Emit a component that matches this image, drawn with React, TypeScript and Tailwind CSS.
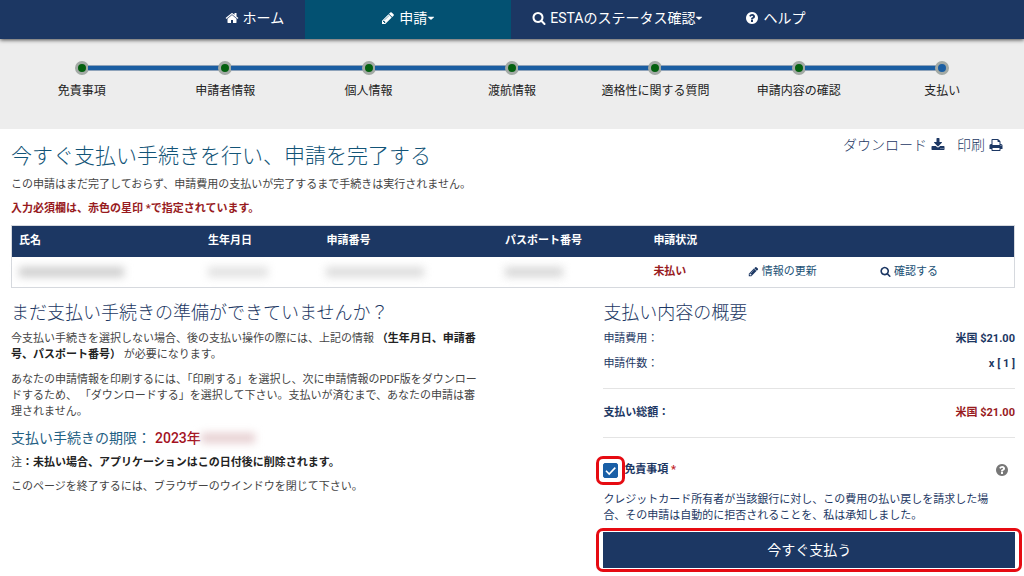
import React from 'react';

const ICONS = {
  home: 'M1472 992v480q0 26-19 45t-45 19h-384v-384h-256v384h-384q-26 0-45-19t-19-45v-480q0-1 .5-3t.5-3l575-474 575 474q1 2 1 6zm223-69l-62 74q-8 9-21 11h-3q-13 0-21-7l-692-577-692 577q-12 8-24 7-13-2-21-11l-62-74q-8-10-7-23.5t11-21.5l719-599q32-26 76-26t76 26l244 204v-195q0-14 9-23t23-9h192q14 0 23 9t9 23v408l219 182q10 8 11 21.5t-7 23.5z',
  pencil:
    'M491 1536l91-91-235-235-91 91v107h128v128h107zm523-928q0-22-22-22-10 0-17 7l-542 542q-7 7-7 17 0 22 22 22 10 0 17-7l542-542q7-7 7-17zm-54-192l416 416-832 832h-416v-416zm683 96q0 53-37 90l-166 166-416-416 166-165q36-38 90-38 53 0 91 38l235 234q37 39 37 91z',
  search:
    'M1216 832q0-185-131.5-316.5t-316.5-131.5-316.5 131.5-131.5 316.5 131.5 316.5 316.5 131.5 316.5-131.5 131.5-316.5zm512 832q0 52-38 90t-90 38q-54 0-90-38l-343-342q-179 124-399 124-143 0-273.5-55.5t-225-150-150-225-55.5-273.5 55.5-273.5 150-225 225-150 273.5-55.5 273.5 55.5 225 150 150 225 55.5 273.5q0 220-124 399l343 343q37 37 37 90z',
  help: 'M1024 1376v-192q0-14-9-23t-23-9h-192q-14 0-23 9t-9 23v192q0 14 9 23t23 9h192q14 0 23-9t9-23zm256-672q0-88-55.5-163t-138.5-116-170-41q-243 0-371 213-15 24 8 42l132 100q7 6 19 6 16 0 25-12 53-68 86-92 34-24 86-24 48 0 85.5 26t37.5 59q0 38-20 61t-68 45q-63 28-115.5 86.5t-52.5 125.5v36q0 14 9 23t23 9h192q14 0 23-9t9-23q0-19 21.5-49.5t54.5-49.5q32-18 49-28.5t46-35 44.5-48 28-60.5 12.5-81zm384 192q0 209-103 385.5t-279.5 279.5-385.5 103-385.5-103-279.5-279.5-103-385.5 103-385.5 279.5-279.5 385.5-103 385.5 103 279.5 279.5 103 385.5z',
  download:
    'M1344 1344q0-26-19-45t-45-19-45 19-19 45 19 45 45 19 45-19 19-45zm256 0q0-26-19-45t-45-19-45 19-19 45 19 45 45 19 45-19 19-45zm128-224v320q0 40-28 68t-68 28h-1472q-40 0-68-28t-28-68v-320q0-40 28-68t68-28h465l135 136q58 56 136 56t136-56l136-136h464q40 0 68 28t28 68zm-325-569q17 41-14 70l-448 448q-18 19-45 19t-45-19l-448-448q-31-29-14-70 17-39 59-39h256v-448q0-26 19-45t45-19h256q26 0 45 19t19 45v448h256q42 0 59 39z',
  print:
    'M448 1536h896v-256h-896v256zm0-640h896v-384h-160q-40 0-68-28t-28-68v-160h-640v640zm1152 64q0-26-19-45t-45-19-45 19-19 45 19 45 45 19 45-19 19-45zm128 0v416q0 13-9.5 22.5t-22.5 9.5h-224v160q0 40-28 68t-68 28h-960q-40 0-68-28t-28-68v-160h-224q-13 0-22.5-9.5t-9.5-22.5v-416q0-79 56.5-135.5t135.5-56.5h64v-544q0-40 28-68t68-28h672q40 0 88 20t76 48l152 152q28 28 48 76t20 88v256h64q79 0 135.5 56.5t56.5 135.5z',
  caret:
    'M1600 704q0 26-19 45l-640 560q-19 19-45 19t-45-19l-640-560q-19-19-19-45t19-45 45-19h1280q26 0 45 19t19 45z',
};

const Icon = ({ name, className }: { name: keyof typeof ICONS; className: string }) => (
  <svg viewBox="0 0 1792 1792" fill="currentColor" aria-hidden="true" className={className}>
    <path d={ICONS[name]} />
  </svg>
);

const STEPS = [
  '免責事項',
  '申請者情報',
  '個人情報',
  '渡航情報',
  '適格性に関する質問',
  '申請内容の確認',
  '支払い',
];

const NavBar = () => (
  <nav className="relative flex h-[39px] justify-center bg-[#1c3763] pl-[6px] text-sm text-white shadow-[0_1px_4px_rgba(0,0,0,0.7)]">
    <a href="#home" className="flex items-center gap-1 px-[21px] pb-[3px]">
      <Icon name="home" className="size-[14px]" />
      ホーム
    </a>
    <a href="#apply" className="flex w-[206px] items-center justify-center bg-[#035172] pb-[3px]">
      <Icon name="pencil" className="mr-1 size-[14px]" />
      申請
      <Icon name="caret" className="size-[8px]" />
    </a>
    <a href="#status" className="flex items-center px-[21px] pb-[3px]">
      <Icon name="search" className="mr-1 size-[14px]" />
      ESTAのステータス確認
      <Icon name="caret" className="size-[8px]" />
    </a>
    <a href="#help" className="flex items-center gap-1 px-[21px] pb-[3px]">
      <Icon name="help" className="size-[14px]" />
      ヘルプ
    </a>
  </nav>
);

const Progress = () => (
  <ol className="grid h-[90px] grid-cols-7 bg-[#ededed] px-[10px] pt-[22px] text-xs text-[#222]">
    {STEPS.map((step, i) => {
      const first = i === 0;
      const last = i === STEPS.length - 1;
      return (
        <li key={step} className="text-center">
          <div className="flex items-center">
            <span className={`h-[6px] flex-1 ${first ? '' : 'border-y border-[#8fa3ba] bg-[#1b5ea2]'}`} />
            <span
              className={`-mx-px size-[14px] rounded-full border-[3px] border-[#a3aaa5] ${
                last ? 'bg-[#1b5ea2]' : 'bg-[#04600f]'
              }`}
            />
            <span className={`h-[6px] flex-1 ${last ? '' : 'border-y border-[#8fa3ba] bg-[#1b5ea2]'}`} />
          </div>
          <div className="mt-2 leading-4">{step}</div>
        </li>
      );
    })}
  </ol>
);

const Masked = ({ className }: { className: string }) => (
  <div aria-hidden="true" className={`h-[10px] bg-[#cdcdcd] blur-[4px] ${className}`} />
);

const Applications = () => (
  <table className="mt-2 w-full table-fixed border-collapse border border-[#d6d9de] text-left">
    <colgroup>
      <col className="w-[18.9%]" />
      <col className="w-[11.8%]" />
      <col className="w-[17.8%]" />
      <col className="w-[14.8%]" />
      <col className="w-[9.4%]" />
      <col className="w-[13.2%]" />
      <col />
    </colgroup>
    <thead className="bg-[#1c3763] text-white">
      <tr className="h-[31px]">
        <th className="px-[7px]">氏名</th>
        <th className="px-[7px]">生年月日</th>
        <th className="px-[7px]">申請番号</th>
        <th className="px-[7px]">パスポート番号</th>
        <th className="px-[7px]">申請状況</th>
        <td />
        <td />
      </tr>
    </thead>
    <tbody>
      <tr className="h-[31px]">
        <td className="px-[7px]"><Masked className="w-[105px]" /></td>
        <td className="px-[7px]"><Masked className="w-[60px] opacity-60" /></td>
        <td className="px-[7px]"><Masked className="w-[98px] opacity-70" /></td>
        <td className="px-[7px]"><Masked className="w-[58px] opacity-80" /></td>
        <td className="px-[7px] font-bold text-[#981b1e]">未払い</td>
        <td className="px-[7px]">
          <a href="#update" className="flex items-center gap-[3px] text-[#205075]">
            <Icon name="pencil" className="size-[11px] text-[#1c3763]" />
            情報の更新
          </a>
        </td>
        <td className="px-[7px]">
          <a href="#view" className="flex items-center gap-[3px] text-[#205075]">
            <Icon name="search" className="size-[11px] text-[#1c3763]" />
            確認する
          </a>
        </td>
      </tr>
    </tbody>
  </table>
);

const Instructions = () => (
  <section className="flex-1">
    <h2 className="text-lg leading-6 font-light text-[#1c3763]">
      まだ支払い手続きの準備ができていませんか？
    </h2>
    <p className="mt-[6px]">
      今支払い手続きを選択しない場合、後の支払い操作の際には、上記の情報{' '}
      <b className="text-[#222]">
        （生年月日、申請番
        <br />
        号、パスポート番号）
      </b>{' '}
      が必要になります。
    </p>
    <p className="mt-[9px]">
      あなたの申請情報を印刷するには、「印刷する」を選択し、次に申請情報のPDF版をダウンロー
      <br />
      ドするため、 「ダウンロードする」を選択して下さい。支払いが済むまで、あなたの申請は審
      <br />
      理されません。
    </p>
    <h3 className="mt-2 flex items-center text-sm leading-5 text-[#1f6083]">
      支払い手続きの期限：
      <span className="ml-1 font-medium text-[#a3121f]">2023年</span>
      <span aria-hidden="true" className="h-[10px] w-[54px] bg-[#e6ced0] blur-[4px]" />
    </h3>
    <p className="mt-[7px]">
      注<b className="text-[#222]">：未払い場合、アプリケーションはこの日付後に削除されます。</b>
    </p>
    <p className="mt-2">このページを終了するには、ブラウザーのウインドウを閉じて下さい。</p>
  </section>
);

const Summary = () => {
  const [agreed, setAgreed] = React.useState(true);

  return (
    <section className="w-[41%] text-[#1c3763]">
      <h2 className="text-lg leading-6 font-light">支払い内容の概要</h2>
      <dl className="mt-[6px]">
        <div className="flex justify-between">
          <dt>申請費用：</dt>
          <dd className="font-bold">米国 $21.00</dd>
        </div>
        <div className="mt-[9px] flex justify-between">
          <dt>申請件数：</dt>
          <dd className="font-bold">x [ 1 ]</dd>
        </div>
        <div className="mt-4 flex justify-between border-y border-[#e4e4e4] py-4 font-bold">
          <dt>支払い総額：</dt>
          <dd className="text-[#981b1e]">米国 $21.00</dd>
        </div>
      </dl>

      <div className="mt-6 flex items-center">
        <span className="relative mr-[6px] size-[15px]">
          <input
            id="agree"
            type="checkbox"
            checked={agreed}
            onChange={e => setAgreed(e.target.checked)}
            className="block size-[15px] appearance-none rounded-[2px] border border-[#1a5fa6] checked:bg-[#1a5fa6]"
          />
          {agreed && (
            <svg
              viewBox="0 0 15 15"
              fill="none"
              stroke="white"
              strokeWidth="1.6"
              className="pointer-events-none absolute inset-0"
            >
              <path d="M3 7.8l3.2 3.2L12.3 4.6" />
            </svg>
          )}
          <span className="pointer-events-none absolute -inset-[7px] rounded-[7px] border-[3px] border-[#e60b12]" />
        </span>
        <label htmlFor="agree" className="font-bold">
          免責事項 <span className="text-[#c21f2c]">*</span>
        </label>
        <button type="button" aria-label="ヘルプ" className="mr-[6px] ml-auto text-[#777]">
          <Icon name="help" className="size-[14px]" />
        </button>
      </div>
      <p className="mt-[14px]">
        クレジットカード所有者が当該銀行に対し、この費用の払い戻しを請求した場
        <br />
        合、その申請は自動的に拒否されることを、私は承知しました。
      </p>
      <div className="relative mt-[8px]">
        <button type="button" className="block h-[36px] w-full bg-[#1c3763] text-sm text-white">
          今すぐ支払う
        </button>
        <span className="pointer-events-none absolute -inset-x-[7px] -inset-y-1 rounded-[7px] border-[3px] border-[#e60b12]" />
      </div>
    </section>
  );
};

export default function App() {
  return (
    <div className="min-h-screen overflow-hidden bg-white font-[Roboto,'Noto_Sans_CJK_JP',sans-serif] text-[11px] leading-4 text-[#444]">
      <NavBar />
      <Progress />
      <main className="pt-[6px] pr-[9px] pl-[11px]">
        <header className="flex items-start justify-between">
          <h1 className="pt-[7px] text-[21px] leading-7 font-light text-[#125477]">
            今すぐ支払い手続きを行い、申請を完了する
          </h1>
          <div className="flex gap-3 pr-3 text-sm leading-5 font-light text-[#1c3763]">
            <a href="#download" className="flex items-center gap-1">
              ダウンロード
              <Icon name="download" className="size-[14px]" />
            </a>
            <a href="#print" className="flex items-center gap-1">
              印刷
              <Icon name="print" className="size-[14px]" />
            </a>
          </div>
        </header>
        <p className="mt-[7px]">
          この申請はまだ完了しておらず、申請費用の支払いが完了するまで手続きは実行されません。
        </p>
        <p className="mt-2 font-bold text-[#981b1e]">入力必須欄は、赤色の星印 *で指定されています。</p>
        <Applications />
        <div className="mt-[13px] flex">
          <Instructions />
          <Summary />
        </div>
      </main>
    </div>
  );
}
